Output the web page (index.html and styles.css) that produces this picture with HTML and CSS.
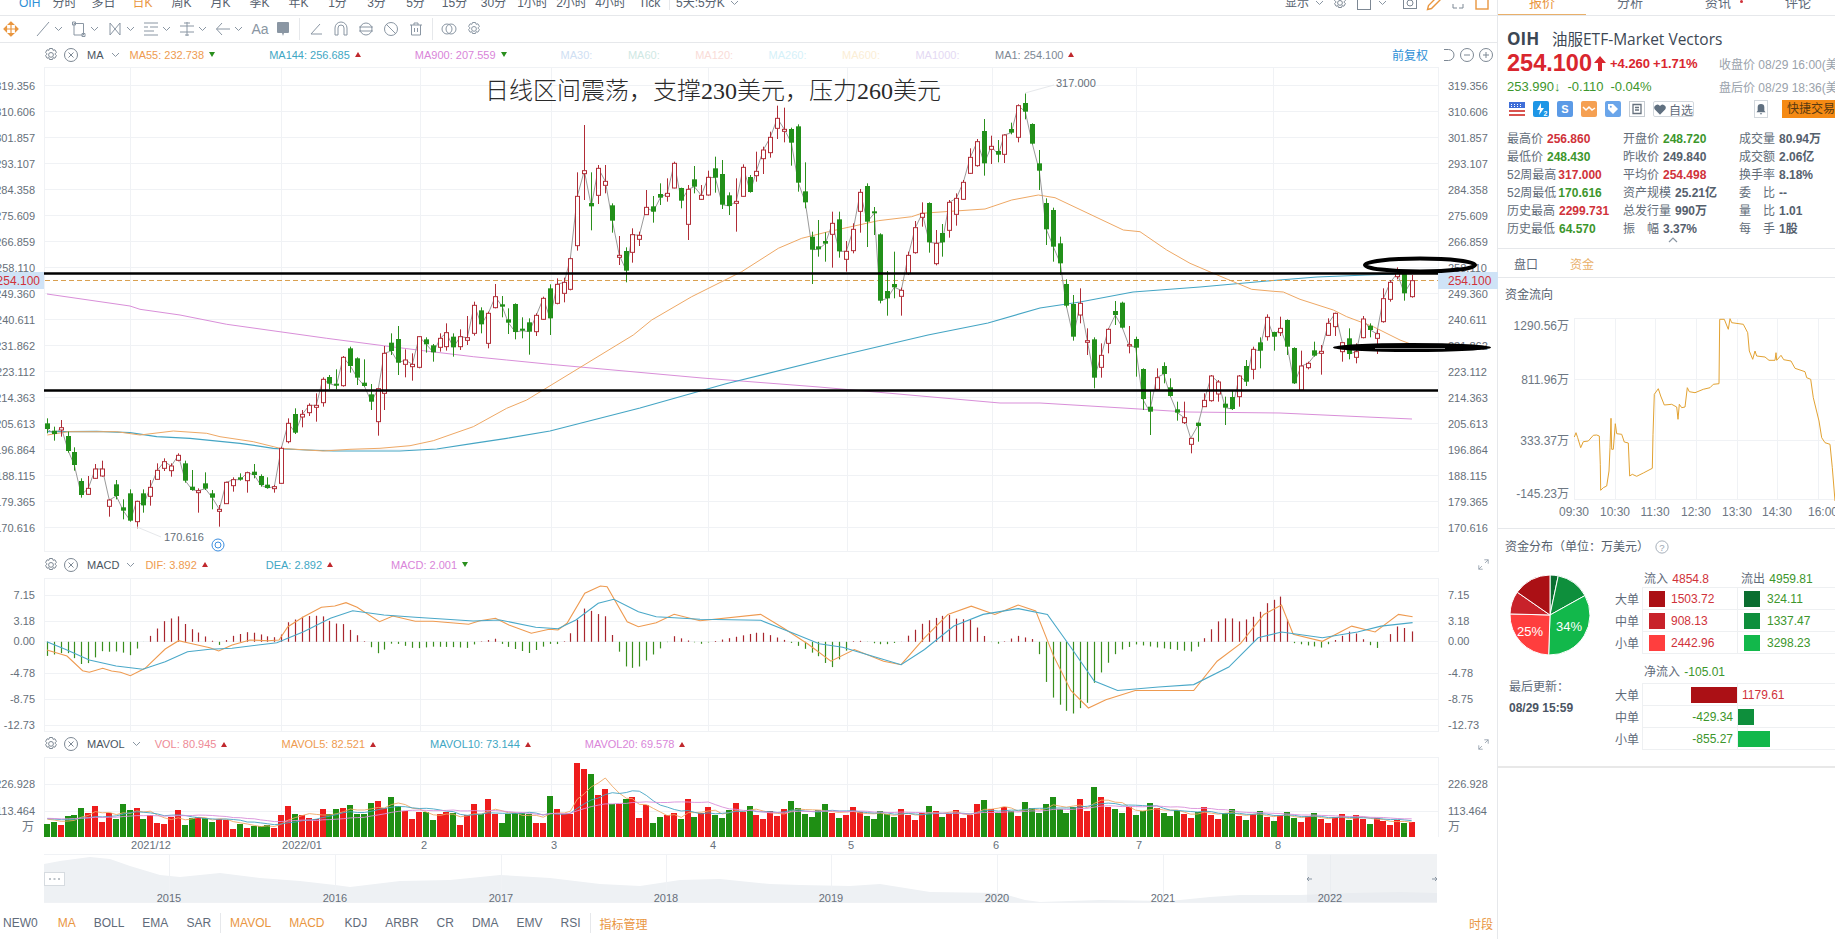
FILE: index.html
```html
<!DOCTYPE html>
<html lang="zh-CN">

<head>
    <meta charset="UTF-8">
    <title>OIH 油服ETF-Market Vectors</title>
    <link rel="stylesheet" href="styles.css">
</head>

<body>
    <svg class="icon-defs" width="0" height="0">
        <symbol id="i-gear" viewBox="0 0 16 16">
            <path d="M6.5 1.5h3l.6 1.8 1.8-.5 1.5 2.6-1.3 1.4v.4l1.3 1.4-1.5 2.6-1.8-.5-.6 1.8h-3l-.6-1.8-1.8.5-1.5-2.6 1.3-1.4v-.4L2.6 5.4l1.5-2.6 1.8.5z" fill="none" stroke="currentColor"/>
            <circle cx="8" cy="7.9" r="2.4" fill="none" stroke="currentColor"/>
        </symbol>
        <symbol id="i-close" viewBox="0 0 16 16">
            <circle cx="8" cy="8" r="6.5" fill="none" stroke="currentColor"/>
            <path d="M5.5 5.5l5 5M10.5 5.5l-5 5" fill="none" stroke="currentColor"/>
        </symbol>
        <symbol id="i-chev" viewBox="0 0 9 6">
            <path d="M1 1l3.5 3.5L8 1" fill="none" stroke="currentColor"/>
        </symbol>
        <symbol id="i-expand" viewBox="0 0 14 14">
            <path d="M8 1h5v5M13 1L9 5M6 13H1V8M1 13l4-4" fill="none" stroke="currentColor"/>
        </symbol>
    </svg>

    <div class="left-panel">
        <div class="top-bar">
            <span class="code">OIH</span>
            <span class="period">分时</span>
            <span class="period">多日</span>
            <span class="period active">日K</span>
            <span class="period">周K</span>
            <span class="period">月K</span>
            <span class="period">季K</span>
            <span class="period">年K</span>
            <span class="period">1分</span>
            <span class="period">3分</span>
            <span class="period">5分</span>
            <span class="period">15分</span>
            <span class="period">30分</span>
            <span class="period">1小时</span>
            <span class="period">2小时</span>
            <span class="period">4小时</span>
            <span class="period">Tick</span>
            <span class="top-sep"></span>
            <span class="multi">5天:5分K</span>
            <svg class="chev"><use href="#i-chev"/></svg>
            <div class="top-right">
                <span>显示</span>
                <svg class="chev"><use href="#i-chev"/></svg>
                <svg class="top-icon"><use href="#i-gear"/></svg>
                <svg class="top-icon" viewBox="0 0 16 16"><rect x="1.5" y="1.5" width="13" height="13" fill="none" stroke="currentColor"/></svg>
                <svg class="chev wide"><use href="#i-chev"/></svg>
                <svg class="top-icon" viewBox="0 0 16 16"><rect x="1.5" y="1.5" width="13" height="12" fill="none" stroke="currentColor"/><circle cx="8" cy="8" r="3" fill="none" stroke="currentColor"/></svg>
                <svg class="top-icon orange" viewBox="0 0 16 16"><path d="M11.5 1.5l3 3-9 9-4 1 1-4z" fill="none" stroke="currentColor" stroke-width="1.4"/></svg>
                <svg class="top-icon" viewBox="0 0 16 16"><path d="M3 9v4h4M13 9v4H9" fill="none" stroke="currentColor"/></svg>
                <svg class="top-icon orange" viewBox="0 0 16 16"><rect x="2" y="1" width="12" height="13" fill="none" stroke="currentColor" stroke-width="1.4"/></svg>
            </div>
        </div>

        <div class="tool-bar">
            <svg class="tool tool-move" viewBox="0 0 16 16"><path d="M8 1v14M1 8h14M8 1L5.5 3.5h5zM8 15l-2.5-2.5h5zM1 8l2.5-2.5v5zM15 8l-2.5-2.5v5z" fill="currentColor" stroke="currentColor" stroke-width="1.2"/></svg>
            <svg class="tool" viewBox="0 0 16 16"><path d="M2 15L14 1" stroke="currentColor" fill="none"/></svg>
            <svg class="chev"><use href="#i-chev"/></svg>
            <svg class="tool" viewBox="0 0 16 16"><path d="M3 2.5h9.5V14H3zM1.5 1h3v3h-3zM11 12.500h3v3h-3z" fill="none" stroke="currentColor"/></svg>
            <svg class="chev"><use href="#i-chev"/></svg>
            <svg class="tool" viewBox="0 0 16 16"><path d="M3 2l10 12M13 2L3 14M3 2v12M13 2v12" fill="none" stroke="currentColor"/></svg>
            <svg class="chev"><use href="#i-chev"/></svg>
            <svg class="tool" viewBox="0 0 16 16"><path d="M1 2h14M1 6h4M7 6h8M1 10h10M1 14h14" fill="none" stroke="currentColor"/></svg>
            <svg class="chev"><use href="#i-chev"/></svg>
            <svg class="tool" viewBox="0 0 16 16"><path d="M1 5h14M1 11h14M8 1v14M5 2h6M6 14h4" fill="none" stroke="currentColor"/></svg>
            <svg class="chev"><use href="#i-chev"/></svg>
            <svg class="tool" viewBox="0 0 16 16"><path d="M7 2L1.500 8 7 14M1.500 8H15" fill="none" stroke="currentColor"/></svg>
            <svg class="chev"><use href="#i-chev"/></svg>
            <span class="tool tool-text">Aa</span>
            <svg class="tool" viewBox="0 0 16 16"><path d="M3 1h10a1 1 0 0 1 1 1v9a1 1 0 0 1-1 1H9l-1 3-1-3H3a1 1 0 0 1-1-1V2a1 1 0 0 1 1-1z" fill="currentColor"/></svg>
            <span class="tool-sep"></span>
            <svg class="tool" viewBox="0 0 16 16"><path d="M12 3L3 13h11" fill="none" stroke="currentColor"/></svg>
            <svg class="tool" viewBox="0 0 16 16"><path d="M2 14V7a6 6 0 0 1 12 0v7h-3V7a3 3 0 0 0-6 0v7z" fill="none" stroke="currentColor"/></svg>
            <svg class="tool" viewBox="0 0 16 16"><circle cx="8" cy="8" r="6" fill="none" stroke="currentColor"/><path d="M1 6h14M1 10h14" fill="none" stroke="currentColor"/></svg>
            <svg class="tool" viewBox="0 0 16 16"><circle cx="8" cy="8" r="6.500" fill="none" stroke="currentColor"/><path d="M3 3l10 10" fill="none" stroke="currentColor"/></svg>
            <svg class="tool" viewBox="0 0 16 16"><path d="M2 4h12M6 4V2h4v2M3.500 4v10h9V4M6.500 7v4M9.500 7v4" fill="none" stroke="currentColor"/></svg>
            <span class="tool-sep"></span>
            <svg class="tool" viewBox="0 0 16 16"><circle cx="6" cy="8" r="5" fill="none" stroke="currentColor"/><circle cx="10" cy="8" r="5" fill="none" stroke="currentColor"/></svg>
            <svg class="tool"><use href="#i-gear"/></svg>
        </div>

        <div class="pane main-pane">
            <div class="legend legend-main">
                <svg class="legend-icon"><use href="#i-gear"/></svg>
                <svg class="legend-icon"><use href="#i-close"/></svg>
                <span class="legend-name">MA</span>
                <svg class="chev"><use href="#i-chev"/></svg>
                <span class="legend-item c-orange">MA55: 232.738<i class="tri down"></i></span>
                <span class="legend-item c-blue">MA144: 256.685<i class="tri up"></i></span>
                <span class="legend-item c-pink">MA900: 207.559<i class="tri down"></i></span>
                <span class="legend-item faded c-f1">MA30:</span>
                <span class="legend-item faded c-f2">MA60:</span>
                <span class="legend-item faded c-f3">MA120:</span>
                <span class="legend-item faded c-f4">MA260:</span>
                <span class="legend-item faded c-f5">MA600:</span>
                <span class="legend-item faded c-f6">MA1000:</span>
                <span class="legend-item c-gray">MA1: 254.100<i class="tri up"></i></span>
                <div class="legend-right">
                    <span class="adjust">前复权</span>
                    <svg class="legend-icon" viewBox="0 0 16 16"><path d="M4 2.500h4.500a5.500 5.500 0 0 1 0 11H4" fill="none" stroke="currentColor"/></svg>
                    <svg class="legend-icon" viewBox="0 0 16 16"><circle cx="8" cy="8" r="6.500" fill="none" stroke="currentColor"/><path d="M5 8h6" stroke="currentColor"/></svg>
                    <svg class="legend-icon" viewBox="0 0 16 16"><circle cx="8" cy="8" r="6.500" fill="none" stroke="currentColor"/><path d="M5 8h6M8 5v6" stroke="currentColor"/></svg>
                </div>
            </div>
            <svg id="priceChart" class="chart" width="1498" height="485" viewBox="0 67 1498 485"></svg>
            <div class="chart-note">日线区间震荡，支撑230美元，压力260美元</div>
        </div>

        <div class="pane">
            <div class="legend legend-sub">
                <svg class="legend-icon"><use href="#i-gear"/></svg>
                <svg class="legend-icon"><use href="#i-close"/></svg>
                <span class="legend-name">MACD</span>
                <svg class="chev"><use href="#i-chev"/></svg>
                <span class="legend-item c-orange">DIF: 3.892<i class="tri up"></i></span>
                <span class="legend-item c-blue">DEA: 2.892<i class="tri up"></i></span>
                <span class="legend-item c-pink">MACD: 2.001<i class="tri down"></i></span>
                <svg class="expand"><use href="#i-expand"/></svg>
            </div>
            <svg id="macdChart" class="chart" width="1498" height="154" viewBox="0 578 1498 154"></svg>
        </div>

        <div class="pane">
            <div class="legend legend-vol">
                <svg class="legend-icon"><use href="#i-gear"/></svg>
                <svg class="legend-icon"><use href="#i-close"/></svg>
                <span class="legend-name">MAVOL</span>
                <svg class="chev"><use href="#i-chev"/></svg>
                <span class="legend-item c-rose">VOL: 80.945<i class="tri up"></i></span>
                <span class="legend-item c-orange">MAVOL5: 82.521<i class="tri up"></i></span>
                <span class="legend-item c-blue">MAVOL10: 73.144<i class="tri up"></i></span>
                <span class="legend-item c-pink">MAVOL20: 69.578<i class="tri up"></i></span>
                <svg class="expand"><use href="#i-expand"/></svg>
            </div>
            <svg id="volChart" class="chart" width="1498" height="97" viewBox="0 757 1498 97"></svg>
        </div>

        <svg id="miniChart" class="chart" width="1498" height="49" viewBox="0 854 1498 49"></svg>

        <div class="index-tabs">
            <span class="first">NEW0</span>
            <span class="on">MA</span>
            <span>BOLL</span>
            <span>EMA</span>
            <span>SAR</span>
            <i class="index-sep"></i>
            <span class="on">MAVOL</span>
            <span class="on macd-tab">MACD</span>
            <span>KDJ</span>
            <span>ARBR</span>
            <span>CR</span>
            <span>DMA</span>
            <span>EMV</span>
            <span>RSI</span>
            <i class="index-sep"></i>
            <span class="on">指标管理</span>
            <span class="on session">时段</span>
        </div>
    </div>

    <div class="right-panel">
        <div class="quote-tabs">
            <span class="active">报价</span>
            <span>分析</span>
            <span>资讯<i class="dot"></i></span>
            <span>评论</span>
        </div>

        <div class="quote-name"><b>OIH</b><span>油服ETF-Market Vectors</span></div>

        <div class="quote-line price-line">
            <div class="price-main">
                <span class="price">254.100</span>
                <svg class="price-arrow" viewBox="0 0 12 15"><path d="M6 0l6 7H8v8H4V7H0z" fill="currentColor"/></svg>
                <span class="price-change">+4.260</span>
                <span class="price-change">+1.71%</span>
            </div>
            <span class="quote-time">收盘价 08/29 16:00(美东)</span>
        </div>

        <div class="quote-line after-line">
            <div class="after-main">
                <span>253.990↓</span>
                <span>-0.110</span>
                <span>-0.04%</span>
            </div>
            <span class="quote-time">盘后价 08/29 18:36(美东)</span>
        </div>

        <div class="badge-row">
            <svg class="badge" viewBox="0 0 16 16"><path d="M0 9h16v2H0zM0 13h16v2H0z" fill="#d9534f"/><path d="M0 1h16v6H0z" fill="#3f6fd8"/><path d="M2 3h1v1H2zM5 3h1v1H5zM8 3h1v1H8zM11 3h1v1h-1zM2 5h1v1H2zM5 5h1v1H5zM8 5h1v1H8zM11 5h1v1h-1z" fill="#fff"/></svg>
            <svg class="badge" viewBox="0 0 16 16"><rect width="16" height="16" rx="2" fill="#1e96e6"/><path d="M8 2L4 9h3l-1 5 5-7H8z" fill="#fff"/><text x="10.500" y="14.500" class="badge-text">2</text></svg>
            <svg class="badge" viewBox="0 0 16 16"><rect width="16" height="16" rx="2" fill="#5b9ae6"/><text x="8" y="12" text-anchor="middle" class="badge-text big">S</text></svg>
            <svg class="badge" viewBox="0 0 16 16"><rect width="16" height="16" rx="2" fill="#f5a052"/><path d="M2 6l3 3 3-3 3 3 3-2" fill="none" stroke="#fff" stroke-width="1.500"/></svg>
            <svg class="badge" viewBox="0 0 16 16"><rect width="16" height="16" rx="2" fill="#6aa5ea"/><path d="M3 3h5l5 5-5 5-5-5z" fill="#fff"/><circle cx="5.800" cy="5.800" r="1" fill="#6aa5ea"/></svg>
            <svg class="badge outline" viewBox="0 0 16 16"><rect x=".5" y=".5" width="15" height="15" fill="none" stroke="#c6ccd2"/><path d="M4 3.500h8v9H4zM6 6.500h4M6 9h4" fill="none" stroke="#66717d" stroke-width="1.300"/></svg>
            <span class="watch-btn"><svg viewBox="0 0 14 12"><path d="M7 12L1 6a3.300 3.300 0 0 1 6-4 3.300 3.300 0 0 1 6 4z" fill="#607080"/></svg>自选</span>
            <span class="bell-btn"><svg viewBox="0 0 12 14"><path d="M6 1a4 4 0 0 1 4 4v4l1.500 2H.5L2 9V5a4 4 0 0 1 4-4zM4.500 12h3L6 14z" fill="#607080"/></svg></span>
            <span class="trade-btn">快捷交易</span>
        </div>

        <div class="stats">
            <div><label>最高价</label><span class="up">256.860</span></div>
            <div><label>开盘价</label><span class="down">248.720</span></div>
            <div><label>成交量</label><span>80.94万</span></div>
            <div><label>最低价</label><span class="down">248.430</span></div>
            <div><label>昨收价</label><span>249.840</span></div>
            <div><label>成交额</label><span>2.06亿</span></div>
            <div><label>52周最高</label><span class="up tight">317.000</span></div>
            <div><label>平均价</label><span class="up">254.498</span></div>
            <div><label>换手率</label><span>8.18%</span></div>
            <div><label>52周最低</label><span class="down tight">170.616</span></div>
            <div><label>资产规模</label><span>25.21亿</span></div>
            <div><label>委　比</label><span>--</span></div>
            <div><label>历史最高</label><span class="up">2299.731</span></div>
            <div><label>总发行量</label><span>990万</span></div>
            <div><label>量　比</label><span>1.01</span></div>
            <div><label>历史最低</label><span class="down">64.570</span></div>
            <div><label>振　幅</label><span>3.37%</span></div>
            <div><label>每　手</label><span>1股</span></div>
        </div>
        <div class="collapse"><svg viewBox="0 0 10 6"><path d="M1 5l4-4 4 4" fill="none" stroke="#8a96a3" stroke-width="1.200"/></svg></div>

        <div class="sub-tabs">
            <span>盘口</span>
            <span class="on">资金</span>
        </div>

        <div class="flow-section">
            <div class="section-title">资金流向</div>
            <svg id="flowChart" class="chart" width="337" height="222" viewBox="1498 305 337 222"></svg>
        </div>

        <div class="dist-section">
            <div class="section-title dist-title">资金分布（单位：万美元）
                <svg class="help" viewBox="0 0 16 16"><circle cx="8" cy="8" r="7" fill="none" stroke="#9aa5b1"/><text x="8" y="12" text-anchor="middle" class="help-mark">?</text></svg>
            </div>
            <div class="dist-body">
                <div class="dist-left">
                    <svg id="pieChart" width="90" height="90" viewBox="0 0 90 90"></svg>
                    <div class="update-label">最后更新：</div>
                    <div class="update-time">08/29 15:59</div>
                </div>
                <div class="dist-right">
                    <div class="fund-head">
                        <span>流入 <em class="up">4854.8</em></span>
                        <span>流出 <em class="down">4959.81</em></span>
                    </div>
                    <div class="fund-row">
                        <label>大单</label>
                        <div class="fund-cell"><i class="swatch s-r1"></i><span class="up">1503.72</span></div>
                        <div class="fund-cell"><i class="swatch s-g1"></i><span class="down">324.11</span></div>
                    </div>
                    <div class="fund-row">
                        <label>中单</label>
                        <div class="fund-cell"><i class="swatch s-r2"></i><span class="up">908.13</span></div>
                        <div class="fund-cell"><i class="swatch s-g2"></i><span class="down">1337.47</span></div>
                    </div>
                    <div class="fund-row">
                        <label>小单</label>
                        <div class="fund-cell"><i class="swatch s-r3"></i><span class="up">2442.96</span></div>
                        <div class="fund-cell"><i class="swatch s-g3"></i><span class="down">3298.23</span></div>
                    </div>
                    <div class="fund-head net-head">
                        <span>净流入 <em class="down">-105.01</em></span>
                    </div>
                    <div class="fund-row net">
                        <label>大单</label>
                        <div class="fund-cell"><i class="bar s-r1" style="width: 46px"></i></div>
                        <div class="fund-cell"><span class="up">1179.61</span></div>
                    </div>
                    <div class="fund-row net">
                        <label>中单</label>
                        <div class="fund-cell"><span class="down">-429.34</span></div>
                        <div class="fund-cell"><i class="bar s-g2" style="width: 16px"></i></div>
                    </div>
                    <div class="fund-row net">
                        <label>小单</label>
                        <div class="fund-cell"><span class="down">-855.27</span></div>
                        <div class="fund-cell"><i class="bar s-g3" style="width: 32px"></i></div>
                    </div>
                </div>
            </div>
        </div>
    </div>

    <script src="chart.js"></script>
</body>

</html>
```

FILE: styles.css
```css
* {
    box-sizing: border-box;
    margin: 0;
    padding: 0;
}

body {
    font-family: 'Liberation Sans', 'Noto Sans CJK SC', sans-serif;
    font-size: 12px;
    color: #5f6b7a;
    background: #fff;
    display: flex;
    width: 1835px;
    height: 939px;
    overflow: hidden;
}

.icon-defs {
    position: absolute;
}

.chev {
    width: 9px;
    height: 6px;
    color: #8a96a3;
    flex-shrink: 0;
}

.left-panel {
    width: 1498px;
    flex-shrink: 0;
    border-right: 1px solid #e6e8eb;
}

/* top period bar, cut off by the screenshot */
.top-bar {
    height: 16px;
    display: flex;
    align-items: flex-start;
    overflow: hidden;
    border-bottom: 1px solid #e6e8eb;
    line-height: 18px;
    color: #55606d;
}

.top-bar > span {
    margin-top: -6px;
}

.top-bar > .chev {
    margin: 0 0 0 5px;
}

.code {
    color: #2e8fd6;
    margin-left: 19px;
    width: 26px;
}

.period {
    width: 39px;
    text-align: center;
}

.period.active {
    color: #e9963f;
}

.top-sep {
    width: 1px;
    height: 16px;
    background: #e6e8eb;
    margin: 0 6px 0 0;
}

.top-right {
    margin-left: auto;
    display: flex;
    align-items: flex-start;
    gap: 6px;
    padding-right: 7px;
}

.top-right span {
    margin-top: -6px;
}

.top-icon {
    width: 16px;
    height: 16px;
    margin: -5px 0 0 2px;
    color: #7d8894;
}

.top-icon.orange {
    color: #e9963f;
}

.chev.wide {
    margin-right: 7px;
}

.tool-bar {
    height: 27px;
    display: flex;
    align-items: center;
    border-bottom: 1px solid #e6e8eb;
    padding-left: 3px;
    color: #8a96a3;
}

.tool {
    width: 16px;
    height: 16px;
    margin-right: 3px;
    flex-shrink: 0;
}

.tool + .tool,
.tool-text + .tool {
    margin-left: 6px;
}

.tool-bar .chev {
    margin-right: 8px;
}

.tool-move {
    color: #e9963f;
    margin-right: 10px;
}

.tool-text {
    font-size: 14px;
    line-height: 16px;
    width: 18px;
    margin-right: 0;
    text-align: center;
}

.tool-sep {
    width: 1px;
    height: 22px;
    background: #e6e8eb;
    margin: 0 8px 0 5px;
}

.pane {
    position: relative;
}

.legend {
    display: flex;
    align-items: center;
    padding-left: 43px;
    font-size: 11px;
    height: 25px;
    padding-bottom: 1px;
}

.legend-main {
    height: 24px;
}

.legend-sub {
    height: 26px;
}

.legend-icon {
    width: 16px;
    height: 16px;
    margin-right: 4px;
    color: #7d8894;
    flex-shrink: 0;
}

.legend-name {
    margin: 0 7px 0 4px;
    color: #4a5561;
}

.legend .chev {
    margin-right: 10px;
}

.legend-item {
    margin-right: 54px;
    display: flex;
    align-items: center;
    white-space: nowrap;
}

.legend-item.faded {
    margin-right: 35.5px;
}

.legend-sub .legend-item {
    margin-right: 58px;
}

.legend-vol .chev {
    margin-right: 14px;
}

.tri {
    width: 0;
    height: 0;
    margin-left: 5px;
    border-left: 3px solid transparent;
    border-right: 3px solid transparent;
}

.tri.up {
    border-bottom: 5px solid #c0282d;
}

.tri.down {
    border-top: 5px solid #2a8f1e;
}

.c-orange { color: #ee9b4f; }
.c-blue { color: #3fa7c4; }
.c-pink { color: #d985d9; }
.c-rose { color: #ee8a96; }
.c-gray { color: #7d8894; }
.c-f1 { color: #cfe0f3; }
.c-f2 { color: #cfe8e4; }
.c-f3 { color: #f9dcd8; }
.c-f4 { color: #d5f1f9; }
.c-f5 { color: #fbeed6; }
.c-f6 { color: #e4d9f3; }

.legend-right {
    margin-left: auto;
    display: flex;
    align-items: center;
    padding-right: 0;
}

.adjust {
    color: #2e8fd6;
    font-size: 12px;
    margin-right: 12px;
}

.legend-right .legend-icon {
    margin-right: 3px;
}

.expand {
    width: 11px;
    height: 11px;
    color: #8a96a3;
    position: absolute;
    left: 1478px;
    top: 7px;
}

.chart {
    display: block;
}

.chart-note {
    position: absolute;
    left: 485px;
    top: 33px;
    font-family: 'Liberation Serif', 'Noto Sans CJK SC', serif;
    font-size: 24px;
    font-weight: 300;
    line-height: 30px;
    color: #2a2a2a;
    white-space: nowrap;
}

.grid {
    stroke: #f0f2f5;
    stroke-width: 1;
}

.axis-text {
    font-size: 11px;
    fill: #666f7a;
}

.tag-text {
    font-size: 12px;
    fill: #d0323a;
}

.mark-text {
    font-size: 11px;
    fill: #666f7a;
}

.index-tabs {
    height: 36px;
    display: flex;
    align-items: center;
    gap: 18px;
    padding: 4px 4px 0 3px;
    color: #5f6b7a;
}

.index-tabs .first {
    margin-right: 2px;
}

.index-tabs .on {
    color: #e9963f;
}

.index-tabs .macd-tab {
    margin-right: 2px;
}

.index-sep {
    width: 1px;
    height: 20px;
    background: #e6e8eb;
    margin: 0 -9px;
}

.session {
    margin-left: auto;
}

/* right hand quote panel */
.right-panel {
    flex: 1;
    min-width: 0;
    overflow: hidden;
    white-space: nowrap;
}

.up {
    color: #d0323a;
}

.down {
    color: #3c962c;
}

.quote-tabs {
    height: 16px;
    display: grid;
    grid-template-columns: 88px 88px 88px 72px;
    border-bottom: 1px solid #e6e8eb;
    text-align: center;
    line-height: 18px;
    overflow: hidden;
    font-size: 13px;
}

.quote-tabs span {
    margin-top: -6px;
    height: 22px;
    position: relative;
}

.quote-tabs .active {
    color: #e9963f;
    border-bottom: 2px solid #e9b06a;
}

.dot {
    position: absolute;
    width: 3px;
    height: 3px;
    border-radius: 50%;
    background: #d0323a;
    left: 66px;
    top: 6px;
}

.quote-name {
    margin-top: 10px;
    height: 24px;
    padding-left: 9px;
    display: flex;
    align-items: center;
    font-family: 'Open Sans', 'Noto Sans CJK SC', sans-serif;
    font-size: 15.5px;
    color: #3c4754;
}

.quote-name b {
    font-size: 17px;
    width: 45px;
}

.quote-line {
    display: grid;
    grid-template-columns: 212px 1fr;
    padding-left: 9px;
    align-items: center;
}

.price-line {
    height: 26px;
}

.after-line {
    height: 20px;
}

.price-main {
    display: flex;
    align-items: center;
    color: #d9262e;
}

.price {
    font-size: 23.5px;
    font-weight: bold;
}

.price-arrow {
    width: 12px;
    height: 15px;
    margin: 0 4px 0 2px;
}

.price-change {
    font-size: 13px;
    font-weight: bold;
    margin-right: 3px;
}

.quote-time {
    color: #9aa2ab;
}

.after-main {
    display: flex;
    gap: 7px;
    font-size: 13px;
    color: #3c962c;
}

.badge-row {
    margin-top: 4px;
    height: 18px;
    padding-left: 11px;
    display: flex;
    align-items: center;
    gap: 8px;
}

.badge {
    width: 16px;
    height: 16px;
    flex-shrink: 0;
}

.badge-text {
    font-size: 7px;
    font-weight: bold;
    fill: #fff;
}

.badge-text.big {
    font-size: 11px;
}

.watch-btn {
    width: 45px;
    height: 16px;
    border: 1px solid #d3d8dd;
    border-radius: 2px;
    display: flex;
    align-items: center;
    justify-content: center;
    gap: 3px;
}

.watch-btn svg {
    width: 12px;
    height: 11px;
}

.bell-btn {
    width: 18px;
    height: 18px;
    margin-left: 52px;
    border: 1px solid #d3d8dd;
    display: flex;
    align-items: center;
    justify-content: center;
}

.bell-btn svg {
    width: 10px;
    height: 12px;
}

.trade-btn {
    margin-left: 6px;
    height: 18px;
    width: 60px;
    padding-left: 5px;
    line-height: 18px;
    background: #f58a14;
    color: #5a3a10;
}

.stats {
    margin-top: 10px;
    padding-left: 9px;
    display: grid;
    grid-template-columns: 116px 116px 100px;
    grid-auto-rows: 18px;
    align-items: center;
}

.stats label {
    margin-right: 4px;
    color: #626d79;
}

.stats span {
    font-weight: bold;
    color: #55606d;
}

.stats .up {
    color: #d0323a;
}

.stats .down {
    color: #3c962c;
}

.stats .tight {
    margin-left: -2px;
}

.collapse {
    height: 12px;
    padding-left: 170px;
    border-bottom: 1px solid #e6e8eb;
}

.collapse svg {
    display: block;
    width: 10px;
    height: 6px;
    margin-top: 1px;
}

.sub-tabs {
    height: 29px;
    display: flex;
    align-items: center;
    gap: 32px;
    padding-left: 16px;
    border-bottom: 1px solid #e6e8eb;
}

.sub-tabs .on {
    color: #e9b06a;
}

.section-title {
    height: 28px;
    padding: 9px 0 0 7px;
    line-height: 16px;
    color: #55606d;
}

.flow-section {
    height: 251px;
    border-bottom: 1px solid #e6e8eb;
}

.flow-text {
    font-size: 12px;
    fill: #6d7783;
}

.dist-section {
    height: 239px;
    border-bottom: 2px solid #e8e8e8;
}

.dist-title {
    height: 28px;
    padding-top: 7px;
    display: flex;
    align-items: center;
}

.help {
    width: 14px;
    height: 14px;
    margin-left: 6px;
}

.help-mark {
    font-size: 11px;
    fill: #9aa5b1;
}

.dist-body {
    display: flex;
    margin-top: 13px;
}

.dist-left {
    width: 117px;
    padding-left: 7px;
}

#pieChart {
    display: block;
}

.update-label {
    margin: 20px 0 0 4px;
    line-height: 14px;
}

.update-time {
    margin: 7px 0 0 4px;
    line-height: 14px;
    font-weight: bold;
    color: #4b5563;
}

.dist-right {
    flex: 1;
    min-width: 0;
}

.fund-head {
    height: 17px;
    padding-left: 29px;
    display: grid;
    grid-template-columns: 97px 97px;
    line-height: 18px;
}

.fund-head em {
    font-style: normal;
    margin-left: 1px;
}

.net-head {
    margin-top: 10px;
    height: 20px;
}

.fund-row {
    display: grid;
    grid-template-columns: 27px 96px 97px;
    height: 22px;
    align-items: stretch;
}

.fund-row label {
    text-align: right;
    padding: 4px 5px 0 0;
    line-height: 18px;
    font-size: 12px;
}

.fund-cell {
    display: flex;
    align-items: center;
    gap: 6px;
    padding-left: 6px;
    border-top: 1px solid #eef0f2;
    border-bottom: 1px solid #eef0f2;
    margin-bottom: -1px;
}

.fund-cell:nth-child(2) {
    border-left: 1px solid #eef0f2;
    border-right: 1px solid #eef0f2;
}

.fund-cell:nth-child(3) {
    gap: 7px;
}

.swatch {
    width: 16px;
    height: 16px;
}

.net .fund-cell {
    padding: 0;
    gap: 0;
}

.net .fund-cell:nth-child(2) {
    justify-content: flex-end;
    padding-right: 4px;
}

.net .fund-cell:nth-child(2):has(.bar) {
    padding-right: 0;
}

.net .fund-cell:nth-child(3) span {
    padding-left: 4px;
}

.bar {
    height: 16px;
}

.s-r1 { background: #ab1015; }
.s-r2 { background: #c8222a; }
.s-r3 { background: #ff3e3e; }
.s-g1 { background: #0a6e30; }
.s-g2 { background: #0e8f3c; }
.s-g3 { background: #12b84b; }
```

FILE: chart.js
```js
// Candles traced from the daily chart: [x, bodyTop, bodyBottom, wickTop, wickBottom, up]
// ox/oy is the block origin, values are in thirds of a pixel.
const candleBlocks = [
    { ox: 40, oy: 230, rows: [
        [22,580,597,565,610,0],[43,602,612,590,632,0],[64,593,600,570,620,1],[85,618,663,605,668,0],
        [103,666,705,652,722,0],[124,753,795,745,803,0],[145,775,793,738,795,1],[166,717,745,702,747,1],
        [187,717,738,692,740,1],[208,810,829,808,860,1],[229,763,798,750,808,0],[250,832,842,808,868,0],
        [271,790,872,778,875,0],[290,814,875,812,895,1],[310,790,826,778,848,0],[331,772,799,750,827,1],
        [352,721,748,700,750,1],[373,695,715,685,723,1],[394,708,722,700,740,1],[415,676,691,670,694,1],
        [436,700,752,692,758,0],[457,770,780,720,782,0],[475,782,788,775,848,1],[496,760,776,727,780,0],
        [517,790,803,780,838,0],[538,838,844,825,890,1],[559,757,821,755,822,1],[580,749,767,742,785,1],
        [601,742,749,730,752,0],[622,728,752,725,788,1],[643,725,735,702,745,0],[662,738,765,733,770,0],
        [682,764,774,742,776,0],[703,770,776,765,788,1],[724,655,760,650,762,1],[745,580,635,565,640,1],
        [766,552,608,535,612,0],[787,553,561,540,592,1],[808,526,548,520,558,1],[829,526,532,490,575,1],
        [848,448,518,442,530,1],[868,441,461,435,478,0],[889,461,467,418,478,0],[910,382,467,378,470,1],
        [931,355,408,350,428,0],[952,385,443,382,465,0],[973,458,468,388,470,0],[994,493,515,462,540,0],
        [1015,476,575,474,617,1],[1033,370,490,348,540,1],[1054,338,363,310,375,0],[1075,327,398,288,435,0],
        [1096,390,403,358,442,1],[1117,403,410,370,452,1],[1138,320,412,318,415,1],[1159,328,343,322,368,0],
        [1180,346,367,342,395,0],[1201,325,352,310,365,1],[1219,308,350,280,362,1],[1240,320,352,310,380,0],
        [1261,320,350,298,360,1],[1282,323,331,258,345,1],[1303,226,310,215,317,1],[1324,241,283,232,310,0],
        [1345,250,340,245,355,1],[1366,200,233,162,235,1],[1387,223,230,198,262,0],[1405,268,278,235,312,0],
        [1426,222,306,220,328,0],[1447,296,302,262,325,0],[1468,277,305,265,374,0],[1489,256,305,250,318,1],
        [1510,205,268,200,270,1]
    ] },
    { ox: 545, oy: 85, rows: [
        [15,610,700,598,750,0],[37,598,655,580,658,1],[58,592,625,578,652,1],[76,521,613,518,616,1],
        [97,334,482,262,497,1],[118,257,266,120,345,1],[139,354,364,262,436,0],[160,250,331,240,357,1],
        [181,289,301,240,325,1],[202,361,407,355,443,0],[223,511,517,453,540,1],[244,498,557,487,592,0],
        [262,449,502,430,533,1],[283,451,463,440,483,1],[304,367,389,315,390,1],[325,364,380,333,413,0],
        [346,327,338,295,360,0],[367,325,334,280,350,1],[388,235,309,230,310,1],[409,309,347,308,370,0],
        [430,313,418,300,465,1],[448,283,305,243,325,0],[469,331,343,300,345,1],[490,277,330,257,332,1],
        [511,250,278,215,323,0],[532,267,359,225,372,0],[553,331,363,322,390,0],[574,349,355,280,440,1],
        [595,247,334,238,336,1],[616,276,321,270,323,0],[634,259,272,200,290,1],[655,195,221,185,267,1],
        [676,157,203,140,218,1],[697,100,130,62,162,1],[718,133,139,68,172,1],[739,132,173,128,242,0],
        [760,124,293,118,320,0],[781,319,352,232,370,0],[802,455,494,440,597,0],[820,484,493,405,515,0],
        [841,468,476,442,530,0],[862,415,448,380,548,1],[883,403,499,380,518,0],[904,499,523,468,560,1],
        [925,433,497,415,505,1],[946,322,379,312,443,1],[967,303,410,295,486,0],[988,379,385,366,450,0],
        [1006,448,647,445,655,0],[1027,618,640,558,692,0],[1048,597,607,500,640,0],[1069,616,634,608,692,1],
        [1090,511,566,500,570,1],[1111,428,503,408,506,1],[1132,385,397,352,425,1],[1153,354,472,352,503,0],
        [1174,475,536,435,541,1],[1192,444,472,417,515,0],[1213,352,436,345,458,1],[1234,340,388,325,422,1],
        [1255,292,343,285,345,1],[1276,217,265,190,267,1],[1297,170,242,162,245,1],[1318,138,235,102,272,0],
        [1339,184,193,152,237,1],[1360,198,209,165,232,0],[1378,150,208,148,234,1],[1399,132,143,113,148,0],
        [1420,62,157,58,172,1],[1441,54,80,25,103,0],[1462,117,176,115,178,0],[1483,235,257,195,315,0],
        [1504,354,433,340,480,0],[1525,375,485,368,530,0]
    ] },
    { ox: 1000, oy: 230, rows: [
        [181,40,100,20,135,0],[199,162,227,148,232,0],[220,222,320,195,332,0],[241,220,255,175,280,1],
        [262,332,337,295,375,1],[283,328,443,322,475,0],[304,376,412,340,443,1],[325,298,340,295,370,1],
        [346,243,255,213,285,0],[367,218,293,215,295,0],[386,344,348,288,370,1],[407,327,353,320,440,0],
        [428,417,507,415,540,0],[449,530,545,480,615,0],[470,443,478,415,480,1],[491,408,432,397,460,0],
        [511,472,498,445,500,0],[532,538,548,515,572,0],[553,563,578,515,582,1],[572,625,643,625,670,1],
        [593,578,588,578,635,0],[613,511,530,490,530,1],[634,438,512,435,515,1],[655,456,492,450,515,1],
        [676,521,533,500,585,0],[697,501,537,480,540,0],[718,438,500,435,530,1],[739,408,455,390,468,0],
        [758,358,418,350,448,1],[779,337,362,322,415,0],[800,262,320,253,332,1],[821,306,320,305,362,0],
        [841,295,308,260,318,1],[862,270,350,268,375,0],[883,354,460,352,462,0],[904,408,480,362,482,1],
        [925,400,413,395,418,1],[943,361,377,335,380,0],[964,364,370,345,434,1],[985,280,316,265,318,1],
        [1006,250,290,248,318,1],[1027,338,365,338,395,1],[1048,325,372,295,388,0],[1069,365,382,340,400,1],
        [1090,267,323,258,325,1],[1111,287,300,280,322,0],[1130,311,325,298,372,1],[1150,206,275,175,278,1],
        [1171,157,208,150,215,1],[1192,130,140,112,148,1],[1213,130,190,125,212,0],[1235,152,200,135,203,1]
    ] }
];

const candles = [];
candleBlocks.forEach(b => {
    b.rows.forEach(r => {
        candles.push({
            x: b.ox + r[0] / 3,
            top: b.oy + r[1] / 3,
            bottom: b.oy + r[2] / 3,
            high: b.oy + r[3] / 3,
            low: b.oy + r[4] / 3,
            up: r[5] === 1
        });
    });
});

const PLOT_LEFT = 45;
const PLOT_RIGHT = 1438;
const LEFT_AXIS = 35;
const GRID_X = [130, 281, 420, 551, 708, 847, 992, 1136, 1273];
const pts = list => list.map(p => p[0].toFixed(1) + ',' + p[1].toFixed(1)).join(' ');
const line = (x1, y1, x2, y2, cls) => `<line x1="${x1}" y1="${y1}" x2="${x2}" y2="${y2}" class="${cls}"/>`;
const poly = (list, color, w) => `<polyline points="${pts(list)}" fill="none" stroke="${color}" stroke-width="${w}"/>`;
const text = (x, y, s, cls, anchor) => `<text x="${x}" y="${y}" class="${cls}" text-anchor="${anchor || 'start'}">${s}</text>`;

const fromZoom = (ox, oy, list) => list.map(p => [ox + p[0] / 3, oy + p[1] / 3]);

function gridVertical(y1, y2) {
    return GRID_X.map(x => line(x + 0.5, y1, x + 0.5, y2, 'grid')).join('');
}

// y on a traced curve at x, straight between points
function curveAt(curve, x) {
    if (x <= curve[0][0]) return curve[0][1];
    for (let i = 1; i < curve.length; i++) {
        if (x <= curve[i][0]) {
            const a = curve[i - 1];
            const b = curve[i];
            return a[1] + (b[1] - a[1]) * (x - a[0]) / (b[0] - a[0]);
        }
    }
    return curve[curve.length - 1][1];
}

// price pane
function drawPrice() {
    const labels = ['319.356', '310.606', '301.857', '293.107', '284.358', '275.609', '266.859', '258.110', '249.360',
        '240.611', '231.862', '223.112', '214.363', '205.613', '196.864', '188.115', '179.365', '170.616'];
    let s = '';

    s += line(PLOT_LEFT, 67.5, PLOT_RIGHT, 67.5, 'grid');
    s += line(PLOT_LEFT, 551.5, PLOT_RIGHT, 551.5, 'grid');
    s += line(44.5, 67, 44.5, 552, 'grid');
    s += line(1438.5, 67, 1438.5, 552, 'grid');
    s += gridVertical(67, 552);

    labels.forEach((l, i) => {
        const y = 85.5 + i * 26.0;
        s += line(PLOT_LEFT, y, PLOT_RIGHT, y, 'grid');
        s += text(LEFT_AXIS, y + 4, l, 'axis-text', 'end');
        s += text(1448, y + 4, l, 'axis-text');
    });

    // moving averages
    const ma900 = [[47, 294]].concat(fromZoom(40, 230, [[270, 228], [300, 238], [420, 255], [560, 283], [860, 325], [1030, 347],
        [1150, 362], [1300, 380], [1400, 390], [1530, 403]]),
        [[702, 378], [819, 387], [1000, 403], [1040, 403], [1123, 408], [1187, 412], [1280, 413], [1367, 417], [1412, 419]]);
    const ma144 = fromZoom(40, 230, [[22, 605], [85, 605], [170, 604], [270, 608], [350, 620], [450, 625], [600, 640], [700, 655],
        [800, 660], [880, 663], [1080, 663], [1190, 657], [1300, 640], [1400, 625], [1530, 603]]).concat(
        [[640, 408], [725, 384], [830, 358], [928, 335], [988, 323], [1040, 308], [1080, 302], [1133, 292], [1200, 287],
            [1267, 281], [1317, 277], [1367, 275], [1397, 274], [1412, 273]]);
    const ma55 = fromZoom(40, 230, [[22, 615], [85, 605], [230, 605], [300, 615], [400, 603], [500, 610], [540, 620], [640, 635],
        [720, 655], [850, 663], [930, 658], [1020, 655], [1110, 647], [1180, 632], [1300, 590], [1400, 535], [1460, 510]]).concat(
        fromZoom(545, 85, [[265, 750], [320, 705], [440, 635], [590, 560], [700, 490], [770, 460], [850, 440], [1000, 407],
            [1100, 395], [1130, 385], [1200, 380], [1320, 372], [1400, 345], [1480, 330], [1530, 338]]),
        fromZoom(1000, 230, [[370, 0], [420, 5], [500, 60], [570, 100], [640, 130], [700, 155], [755, 178], [820, 184], [850, 186],
            [900, 208], [1000, 240], [1040, 260], [1120, 290], [1200, 330], [1240, 345]]));
    s += poly(ma900, '#d98fd9', 1);
    s += poly(ma144, '#45a5c4', 1.2);
    s += poly(ma55, '#eea865', 1);

    // last price line
    s += `<line x1="${PLOT_LEFT}" y1="280.5" x2="${PLOT_RIGHT}" y2="280.5" stroke="#d9a050" stroke-dasharray="5 3"/>`;

    // MA1 close line under the candles
    s += poly(candles.map(c => [c.x, c.up ? c.top : c.bottom]), '#9a9a9a', 1);

    candles.forEach(c => {
        const x = Math.round(c.x) + 0.5;
        if (c.up) {
            s += `<path d="M${x} ${c.high}V${c.top}M${x} ${c.bottom}V${c.low}" stroke="#b02c36" fill="none"/>`;
            s += `<rect x="${x - 2}" y="${c.top}" width="4" height="${Math.max(c.bottom - c.top, 1)}" fill="#fff" stroke="#b02c36"/>`;
        } else {
            s += `<path d="M${x} ${c.high}V${c.low}" stroke="#2b8f1c" fill="none"/>`;
            s += `<rect x="${x - 2.5}" y="${c.top}" width="5" height="${Math.max(c.bottom - c.top, 2)}" fill="#22901a"/>`;
        }
    });

    // high and low marks
    s += `<path d="M1025 93L1054 85" stroke="#e6e8eb" fill="none"/>`;
    s += text(1056, 87, '317.000', 'mark-text');
    s += `<path d="M137 527L161 537" stroke="#e6e8eb" fill="none"/>`;
    s += text(164, 541, '170.616', 'mark-text');
    s += `<circle cx="218" cy="545" r="6" fill="none" stroke="#3d8fe0"/><circle cx="218" cy="545" r="3" fill="none" stroke="#3d8fe0"/>`;

    // price tags
    s += `<rect x="0" y="272" width="44" height="17" fill="#cfe3f7"/>`;
    s += text(40, 284.500, '254.100', 'tag-text', 'end');
    s += `<rect x="1438" y="272" width="60" height="17" fill="#cfe3f7"/>`;
    s += text(1448, 284.500, '254.100', 'tag-text');

    // hand drawn lines on top of the screenshot
    s += `<path d="M44 273.500H1438M44 390.500H1438" stroke="#000" stroke-width="2.500" fill="none"/>`;
    s += `<ellipse cx="1420" cy="265" rx="55" ry="6.500" fill="none" stroke="#000" stroke-width="4"/>`;
    s += `<ellipse cx="1412" cy="347.500" rx="79" ry="4.600" fill="#000"/>`;
    s += `<path d="M1375 348.500H1445" stroke="#888" stroke-width="1"/>`;

    document.getElementById('priceChart').innerHTML = s;
}

// first part of the MACD curves in zoomed units, the rest in screenshot units
const macdFromZoom = list => list.map(p => [p[0] / 2.24, 550 + p[1] / 3]);
const macdFromShot = list => list.map(p => [p[0] * 1.1703, p[1] * 1.1703]);

const difCurve = macdFromZoom([[105, 300], [150, 318], [185, 362], [200, 367], [230, 355], [250, 363], [270, 367], [292, 377],
    [325, 355], [370, 297], [400, 272], [420, 278], [470, 293], [490, 303], [520, 285], [560, 270], [600, 272], [625, 270],
    [645, 230], [680, 200], [720, 172], [750, 168], [775, 158], [800, 172], [850, 215], [880, 198], [930, 214], [970, 214],
    [1010, 218], [1050, 223], [1075, 212], [1110, 205], [1140, 225], [1190, 250], [1230, 238], [1250, 240], [1270, 220],
    [1310, 130], [1345, 108], [1360, 110], [1405, 215], [1430, 230], [1470, 218], [1510, 193], [1568, 212]]).concat(
    macdFromShot([[650, 525], [670, 537], [690, 550], [710, 565], [730, 555], [755, 565], [770, 568], [790, 545], [810, 525],
        [830, 518], [850, 525], [870, 517], [885, 522], [900, 560], [915, 590], [930, 605], [945, 598], [970, 590], [1000, 590],
        [1020, 590], [1040, 565], [1060, 550], [1080, 525], [1095, 517], [1105, 542], [1130, 548], [1155, 535], [1175, 540],
        [1195, 525], [1207, 527]]));

const deaCurve = macdFromZoom([[105, 275], [150, 300], [200, 330], [260, 348], [320, 358], [370, 335], [420, 305], [470, 298],
    [520, 295], [620, 278], [680, 245], [740, 205], [790, 182], [860, 195], [930, 202], [1000, 208], [1060, 213], [1120, 210],
    [1200, 232], [1250, 236], [1290, 210], [1340, 160], [1375, 148], [1430, 185], [1470, 200], [1510, 203], [1568, 208]]).concat(
    macdFromShot([[650, 530], [680, 542], [700, 550], [720, 553], [750, 562], [770, 568], [790, 555], [815, 535], [840, 525],
        [870, 520], [895, 525], [915, 553], [935, 582], [955, 590], [990, 587], [1020, 585], [1050, 570], [1075, 545], [1095, 540],
        [1130, 545], [1160, 540], [1180, 535], [1207, 532]]));

function drawMacd() {
    const zeroY = 641.8;
    let s = '';

    s += line(PLOT_LEFT, 578.5, PLOT_RIGHT, 578.5, 'grid');
    s += line(PLOT_LEFT, 731.5, PLOT_RIGHT, 731.5, 'grid');
    s += line(44.5, 578, 44.5, 732, 'grid');
    s += line(1438.5, 578, 1438.5, 732, 'grid');
    s += gridVertical(578, 732);

    [['7.15', 595], ['3.18', 621], ['0.00', 641], ['-4.78', 673], ['-8.75', 699], ['-12.73', 725]].forEach(r => {
        s += line(PLOT_LEFT, r[1] + 0.5, PLOT_RIGHT, r[1] + 0.5, 'grid');
        s += text(LEFT_AXIS, r[1] + 4, r[0], 'axis-text', 'end');
        s += text(1448, r[1] + 4, r[0], 'axis-text');
    });

    candles.forEach(c => {
        const gap = curveAt(deaCurve, c.x) - curveAt(difCurve, c.x);
        const x = Math.round(c.x) + 0.5;
        const color = gap >= 0 ? '#a8262e' : '#3a8f1e';
        s += `<line x1="${x}" y1="${zeroY}" x2="${x}" y2="${zeroY - gap * 1.7}" stroke="${color}" stroke-width="1.200"/>`;
    });

    s += poly(difCurve, '#ee9a50', 1.100);
    s += poly(deaCurve, '#4aa8c8', 1.100);

    document.getElementById('macdChart').innerHTML = s;
}

// bar heights in px, index by candle
const volumes = [13, 15, 12, 21, 22, 29, 24, 31, 15, 24, 18, 33, 27, 29, 18, 22, 14, 13, 20, 27, 12, 19, 20, 19, 15, 18, 17, 8, 13, 9,
    11, 11, 12, 9, 22, 31, 23, 22, 19, 18, 28, 23, 28, 29, 32, 23, 23, 34, 36, 29, 40, 31, 26, 18, 25, 25, 17, 23, 25, 24,
    12, 22, 33, 23, 38, 23, 14, 23, 24, 24, 23, 14, 14, 41, 28, 23, 23, 74, 68, 63, 42, 48, 33, 33, 38, 40, 19, 32, 14, 20,
    22, 24, 18, 38, 20,
    24, 30, 22, 19, 27, 34, 25, 31, 22, 18, 26, 21, 28, 36, 29, 23, 20, 27, 33, 24,
    19, 22, 30, 25, 21, 18, 26, 23, 20, 28, 22, 17, 24, 31, 26, 20, 23, 27, 19, 22,
    33, 37, 28, 24, 30, 26, 21, 35, 29, 24, 33, 40, 28, 24, 30, 38, 26, 50, 40, 30,
    28, 24, 30, 22, 26, 34, 29, 24, 21, 27, 23, 19, 25, 30, 22, 18, 24, 28, 21, 17,
    23, 26, 20, 16, 22, 25, 19, 15, 21, 24, 18, 14, 20, 23, 17, 22, 18, 13, 19, 16, 12, 17, 14, 15];

function drawVolume() {
    const base = 837;
    let s = '';

    s += line(PLOT_LEFT, 757.5, PLOT_RIGHT, 757.5, 'grid');
    s += line(44.5, 757, 44.5, 837, 'grid');
    s += line(1438.5, 757, 1438.5, 837, 'grid');
    s += gridVertical(757, 837);

    [['226.928', 784], ['113.464', 811]].forEach(r => {
        s += line(PLOT_LEFT, r[1] + 0.5, PLOT_RIGHT, r[1] + 0.5, 'grid');
        s += text(LEFT_AXIS, r[1] + 4, r[0], 'axis-text', 'end');
        s += text(1448, r[1] + 4, r[0], 'axis-text');
    });
    s += text(34, 831, '万', 'flow-text', 'end');
    s += text(1448, 831, '万', 'flow-text');

    candles.forEach((c, i) => {
        const h = volumes[i] || 15;
        s += `<rect x="${Math.round(c.x) - 3}" y="${base - h}" width="6" height="${h}" fill="${c.up ? '#ee1c1c' : '#1f8f14'}"/>`;
    });

    [[5, '#eea865'], [10, '#45a5c4'], [20, '#d98fd9']].forEach(m => {
        const list = candles.map((c, i) => {
            let sum = 0;
            for (let k = i - m[0] + 1; k <= i; k++) {
                sum += k >= 0 ? (volumes[k] || 15) : 19;
            }
            return [c.x, base - sum / m[0]];
        });
        s += poly(list, m[1], 0.900);
    });

    [['2021/12', 151], ['2022/01', 302], ['2', 424], ['3', 554], ['4', 713], ['5', 851], ['6', 996], ['7', 1139], ['8', 1278]].forEach(r => {
        s += text(r[1], 849, r[0], 'axis-text', 'middle');
    });

    document.getElementById('volChart').innerHTML = s;
}

function drawMini() {
    const years = [['2015', 169], ['2016', 335], ['2017', 501], ['2018', 666], ['2019', 831], ['2020', 997], ['2021', 1163], ['2022', 1330]];
    const area = [[44, 864], [60, 861], [90, 857], [110, 859], [130, 866], [160, 875], [180, 877], [220, 873], [260, 878], [300, 881],
        [335, 885], [350, 887], [400, 881], [450, 880], [500, 875], [550, 878], [600, 884], [640, 886], [680, 880], [720, 879],
        [770, 884], [800, 885], [850, 886], [880, 884], [930, 892], [1000, 893], [1025, 900], [1040, 902], [1100, 900], [1170, 901],
        [1210, 897], [1240, 895], [1300, 895], [1350, 893], [1400, 892], [1437, 893], [1437, 903], [44, 903]];
    let s = '';

    s += line(44, 854.5, 1437, 854.5, 'grid');
    s += `<polygon points="${pts(area)}" fill="#eef1f4"/>`;
    years.forEach(y => {
        s += line(y[1] + 0.5, 855, y[1] + 0.5, 903, 'grid');
    });
    s += `<rect x="1307" y="855" width="130" height="48" fill="#e6eaed" fill-opacity="0.6"/>`;
    years.forEach(y => {
        s += text(y[1], 902, y[0], 'axis-text', 'middle');
    });
    s += line(44, 902.5, 1437, 902.5, 'grid');
    s += `<rect x="44.500" y="872.500" width="20" height="13" fill="#fff" stroke="#d6dbe0"/>`;
    s += `<path d="M49 879h2M53.500 879h2M58 879h2" stroke="#7d8894" fill="none"/>`;
    s += `<path d="M1312 879h-5l2-2M1307 879l2 2M1432 879h5l-2-2M1437 879l-2 2" stroke="#8a96a3" fill="none"/>`;

    document.getElementById('miniChart').innerHTML = s;
}

function drawFlow() {
    const path = fromZoom(1495, 280, [[238, 468], [243, 455], [248, 470], [257, 500], [265, 482], [280, 480], [295, 463], [305, 462],
        [313, 465], [316, 550], [317, 628], [325, 620], [335, 615], [342, 570], [345, 500], [348, 412], [350, 505], [355, 505],
        [361, 428], [365, 458], [380, 460], [388, 483], [400, 486], [404, 585], [412, 580], [425, 586], [445, 576], [472, 562],
        [474, 460], [478, 340], [490, 323], [497, 345], [508, 372], [530, 370], [545, 378], [549, 415], [553, 370], [560, 380],
        [570, 378], [577, 320], [583, 332], [600, 335], [625, 325], [645, 320], [655, 310], [672, 308], [674, 115], [688, 115],
        [700, 145], [705, 113], [710, 125], [745, 130], [758, 155], [763, 210], [773, 235], [780, 210], [785, 225], [810, 228],
        [822, 238], [840, 238], [843, 215], [845, 238], [858, 223], [866, 236], [888, 240], [900, 262], [930, 272], [935, 290],
        [947, 295], [955, 350], [972, 420], [980, 470], [990, 485], [1005, 490], [1012, 560], [1020, 660]]);
    let s = '';

    [317.5, 378.5, 439.5, 498.5].forEach(y => {
        s += line(1574, y, 1835, y, 'grid');
    });
    [1574, 1615, 1655, 1696, 1737, 1777, 1818].forEach(x => {
        s += line(x + 0.5, 317, x + 0.5, 498, 'grid');
    });
    [['1290.56万', 329], ['811.96万', 383], ['333.37万', 444], ['-145.23万', 497]].forEach(r => {
        s += text(1569, r[1], r[0], 'flow-text', 'end');
    });
    [['09:30', 1574], ['10:30', 1615], ['11:30', 1655], ['12:30', 1696], ['13:30', 1737], ['14:30', 1777], ['16:00', 1823]].forEach(r => {
        s += text(r[1], 515, r[0], 'flow-text', 'middle');
    });
    s += poly(path, '#e2a232', 1);

    document.getElementById('flowChart').innerHTML = s;
}

function drawPie() {
    const parts = [[324.11, '#0a6e30'], [1337.47, '#0e8f3c'], [3298.23, '#12b84b'], [2442.96, '#ff3e3e'], [908.13, '#c8222a'], [1503.72, '#ab1015']];
    const total = parts.reduce((sum, p) => sum + p[0], 0);
    const cx = 45;
    const cy = 45;
    const r = 40;
    let angle = -Math.PI / 2;
    let s = '';

    parts.forEach(p => {
        const next = angle + p[0] / total * Math.PI * 2;
        const large = next - angle > Math.PI ? 1 : 0;
        const x1 = cx + r * Math.cos(angle);
        const y1 = cy + r * Math.sin(angle);
        const x2 = cx + r * Math.cos(next);
        const y2 = cy + r * Math.sin(next);
        s += `<path d="M${cx} ${cy}L${x1} ${y1}A${r} ${r} 0 ${large} 1 ${x2} ${y2}Z" fill="${p[1]}" stroke="#fff" stroke-width="1"/>`;
        angle = next;
    });
    s += `<text x="64" y="61" fill="#fff" font-size="13" text-anchor="middle">34%</text>`;
    s += `<text x="25" y="66" fill="#fff" font-size="13" text-anchor="middle">25%</text>`;

    document.getElementById('pieChart').innerHTML = s;
}

drawPrice();
drawMacd();
drawVolume();
drawMini();
drawFlow();
drawPie();
```
